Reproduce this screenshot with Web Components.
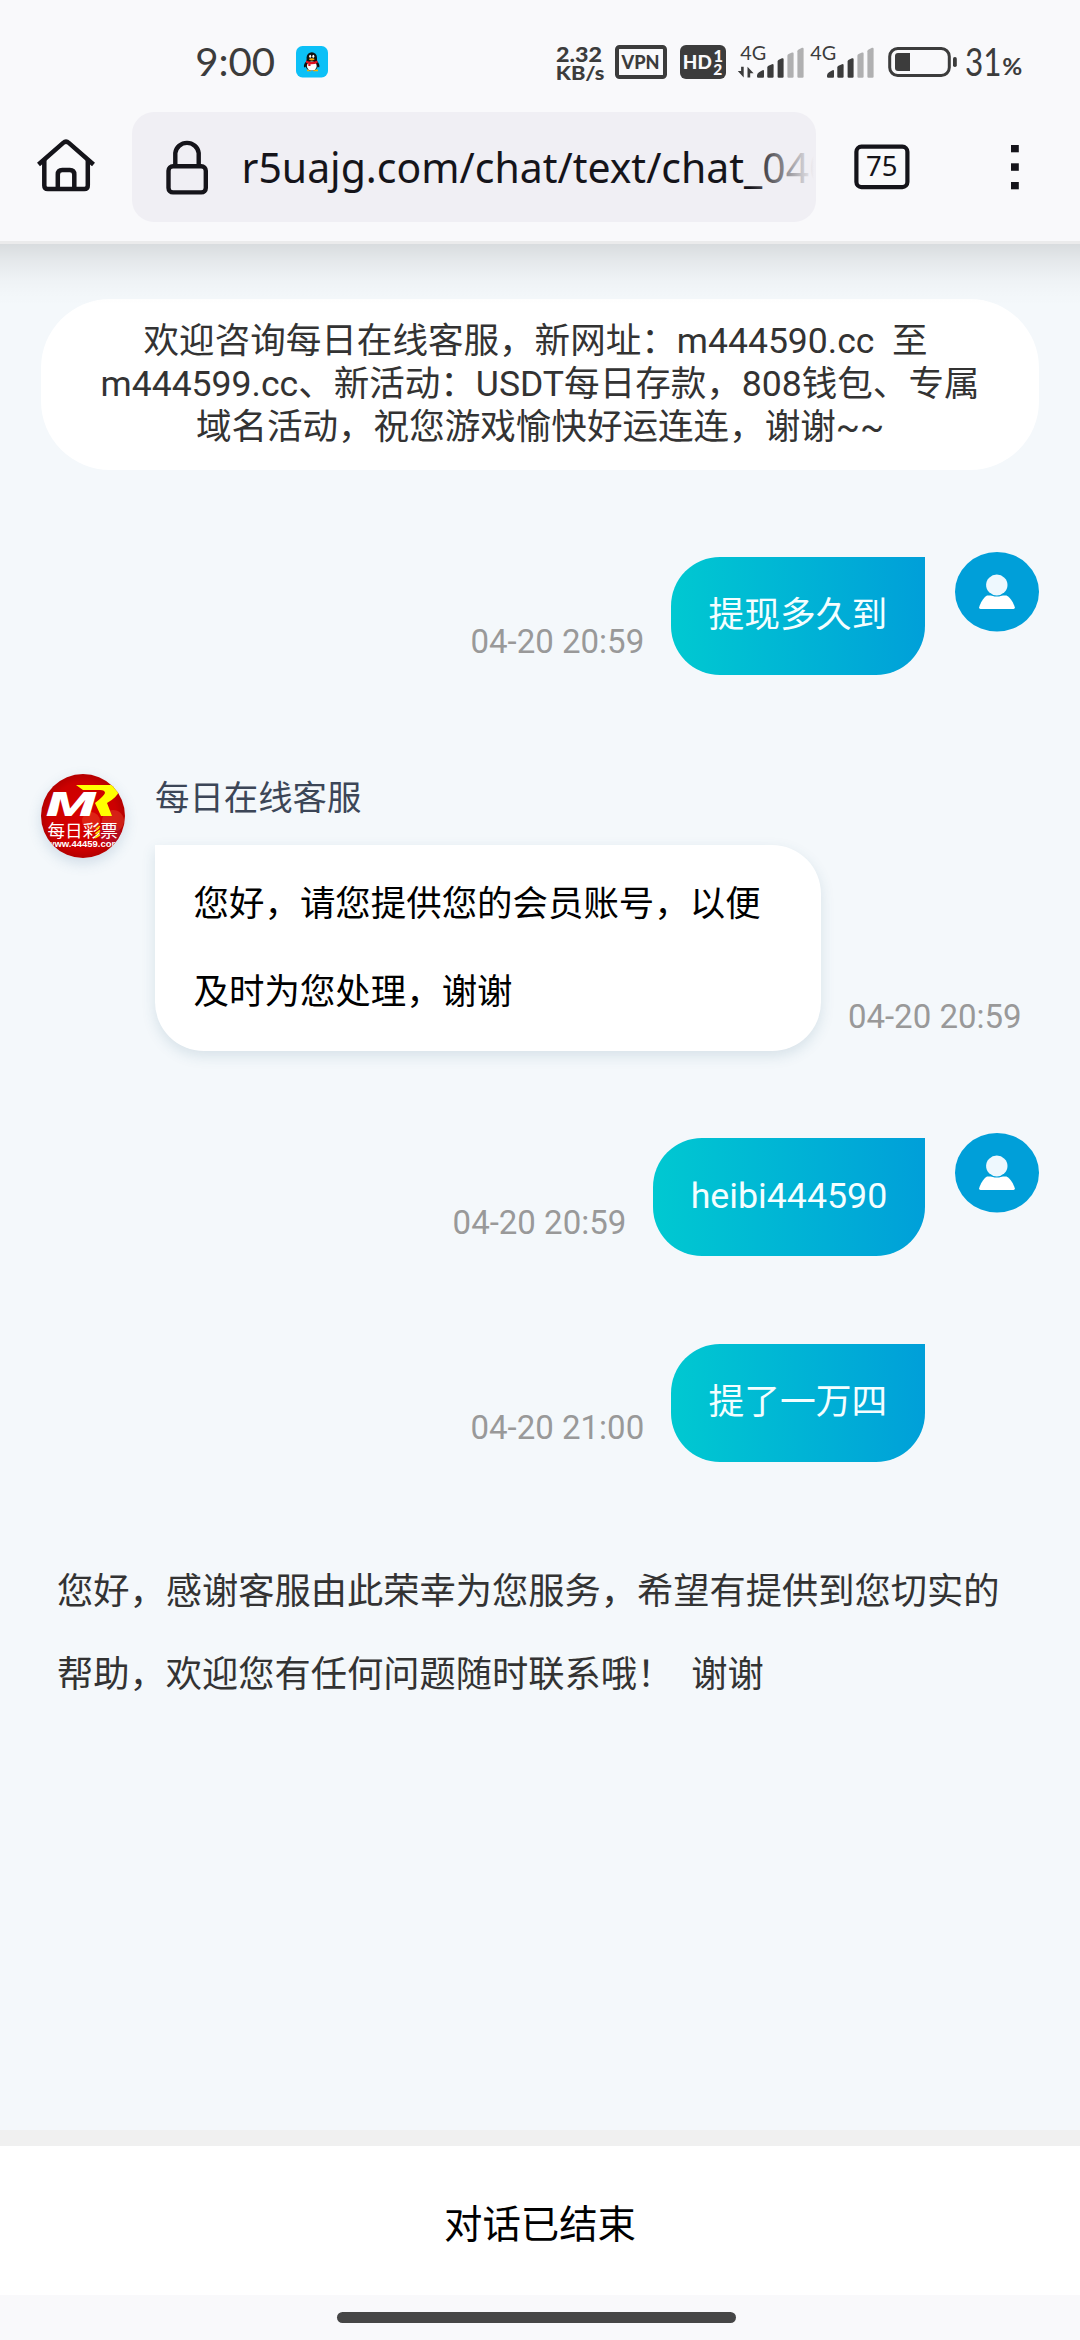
<!DOCTYPE html>
<html lang="zh-CN">
<head>
<meta charset="utf-8">
<title>在线客服</title>
<style>
html,body{margin:0;padding:0}
body{width:1080px;height:2340px;overflow:hidden;background:#f4f8fb;font-family:Roboto,"Noto Sans CJK SC",sans-serif}
</style>
</head>
<body>
<chat-app></chat-app>
<script>
const define = (name, html) => customElements.define(name, class extends HTMLElement {
  constructor(){
    super();
    const t = document.createElement('template');
    t.innerHTML = html.trim();
    this.attachShadow({mode:'open'}).append(t.content.cloneNode(true));
  }
});

/* Signal strength: shared bars, optional data arrows */
customElements.define('signal-meter', class extends HTMLElement {
  constructor(){
    super();
    const arrows = this.hasAttribute('data')
      ? '<path d="M6.7 66.3V77L.8 70.6H4.1V66.3ZM10.5 77V66.3L16.6 72.8H13.2V77Z" transform="translate(0 .4)"/>' : '';
    this.attachShadow({mode:'open'}).innerHTML = `
<style>:host{display:block;height:40px}svg{display:block;overflow:visible}</style>
<svg width="70" height="40" viewBox="0 42 70 40" fill="#3c3c3c">
  <text x="3.2" y="60" font-family="Lato" font-size="20" textLength="26" lengthAdjust="spacingAndGlyphs">4G</text>
  ${arrows}
  <path d="M20 75.5Q20 73.5 22 72.3L25 70.4Q27 69.4 27 71V76.5Q27 77.7 26 77.7H21.2Q20 77.7 20 76.5Z"/>
  <path d="M30.3 67.5Q30.3 66.3 31.5 65.7L35 64.2Q36.6 63.8 36.6 65.2V76.5Q36.6 77.7 35.5 77.7H31.5Q30.3 77.7 30.3 76.5Z"/>
  <path d="M40.6 61.5Q40.6 60.3 41.8 59.7L45 58.3Q46.6 57.9 46.6 59.3V76.5Q46.6 77.7 45.5 77.7H41.8Q40.6 77.7 40.6 76.5Z"/>
  <g fill="#b0b0b1"><path d="M50.4 55.8Q50.4 54.6 51.6 54L55 52.6Q56.6 52.2 56.6 53.6V76.5Q56.6 77.7 55.5 77.7H51.6Q50.4 77.7 50.4 76.5Z"/>
  <path d="M60.4 51.2Q60.4 50 61.6 49.4L65 47.8Q66.6 47.4 66.6 48.8V76.5Q66.6 77.7 65.5 77.7H61.6Q60.4 77.7 60.4 76.5Z"/></g>
</svg>`;
  }
});

define('status-bar', `
<style>
:host{display:flex;align-items:center;height:100px;padding-top:23px;padding-left:190px;box-sizing:border-box;background:#f9f9fb}
svg{display:block;flex:none;overflow:visible}
.qq{margin-left:16px}.speed{margin-left:219px}
</style>
<svg width="90" height="40" viewBox="190 42 90 40" fill="#3c3c3c"><text x="195.2" y="76.3" font-family="Lato" font-size="39" textLength="80" lengthAdjust="spacingAndGlyphs">9:00</text></svg>
<svg class="qq" width="32" height="40" viewBox="296 42 32 40">
  <rect x="296" y="46" width="32" height="31.5" rx="6.5" fill="#0cc0f7"/>
  <path d="M307 70.3h4M313 70.3h5" stroke="#f5b400" stroke-width="1.8"/>
  <path d="M305.6 62C303.8 64 303.6 67 304.4 67.5L306.5 66M317.8 62C319.6 64 319.8 67 319 67.5L317 66" fill="#111"/>
  <ellipse cx="311.7" cy="64.5" rx="6.5" ry="6.2" fill="#111"/>
  <ellipse cx="311.8" cy="66" rx="4.9" ry="4.6" fill="#fff"/>
  <path d="M306.6 61V57.5a5.2 5.2 0 0 1 10.4 0V61Z" fill="#111"/>
  <ellipse cx="310.2" cy="56.3" rx="1" ry="1.5" fill="#fff"/><ellipse cx="313.3" cy="56.3" rx="1" ry="1.5" fill="#fff"/>
  <ellipse cx="311.8" cy="59.3" rx="2.8" ry="1.1" fill="#fa0"/>
  <path d="M306 60.6Q311.8 63.2 317.5 60.6V63Q314 64.6 310.5 64.3V66H308.3V63.6L306 62.8Z" fill="#e01020"/>
</svg>
<svg class="speed" width="60" height="44" viewBox="547 40 60 44" fill="#3c3c3c" font-family="Lato" font-weight="900">
  <text x="556" y="62.2" font-size="21.5" textLength="46" lengthAdjust="spacingAndGlyphs">2.32</text>
  <text x="555.8" y="80" font-size="19.8" textLength="48.6" lengthAdjust="spacingAndGlyphs">KB/s</text>
</svg>
<svg width="66" height="40" viewBox="607 42 66 40"><rect x="617" y="47" width="48" height="30" rx="2.5" fill="none" stroke="#3c3c3c" stroke-width="4"/>
  <text x="621.6" y="69" font-family="Lato" font-weight="900" font-size="18.4" textLength="38" lengthAdjust="spacingAndGlyphs" fill="#3c3c3c">VPN</text></svg>
<svg width="64" height="40" viewBox="673 42 64 40" font-family="Lato" font-weight="900" fill="#f9f9fb"><rect x="680" y="45" width="46" height="34" rx="6" fill="#3c3c3c"/>
  <text x="682.8" y="69" font-size="18.6" textLength="29" lengthAdjust="spacingAndGlyphs">HD</text>
  <text x="713.4" y="61.5" font-size="16.5">1</text><text x="713.3" y="75" font-size="15.5">2</text></svg>
<signal-meter data></signal-meter><signal-meter></signal-meter>
<svg width="150" height="40" viewBox="877 42 150 40" fill="#3c3c3c">
  <rect x="889.7" y="48.5" width="59.6" height="27" rx="8" fill="none" stroke="#3c3c3c" stroke-width="3"/>
  <path d="M898 53H910V71H898Q895 71 895 68V56Q895 53 898 53Z"/><rect x="953" y="57" width="3.8" height="10" rx="1.8"/>
  <text x="965" y="76" font-family="Lato" font-size="38.5" textLength="36.5" lengthAdjust="spacingAndGlyphs">31</text>
  <text x="1002.2" y="75.3" font-family="Lato" font-weight="bold" font-size="23.5" textLength="20" lengthAdjust="spacingAndGlyphs">%</text>
</svg>`);

define('browser-bar', `
<style>
:host{display:flex;align-items:flex-start;height:144px;padding:12px 0 0 32px;box-sizing:border-box;background:#f9f9fb;border-bottom:3.4px solid #ebebec;position:relative}
:host::after{content:"";position:absolute;left:0;right:0;top:144px;height:62px;background:linear-gradient(rgba(0,0,0,.115),rgba(0,0,0,.065) 25%,rgba(0,0,0,.025) 58%,rgba(0,0,0,.008) 80%,transparent)}
svg{display:block;flex:none;overflow:visible}
.url{display:flex;width:684px;height:110px;border-radius:22px;background:#f0eff4;margin-left:32px;overflow:hidden}
.tabs{margin-left:34px}.menu{margin-left:90px}
</style>
<svg width="68" height="110" viewBox="32 112 68 110" fill="none" stroke="#15141a" stroke-width="4.5" stroke-linejoin="round">
  <path d="M38.5 164.5L63.2 142.9Q66 140.5 68.8 142.9L93.5 164.5"/><path d="M44.3 160V185.5Q44.3 189 47.8 189H84.3Q87.8 189 87.8 185.5V160"/>
  <path d="M57.8 189V174.5Q57.8 170 62.3 170H69.8Q74.3 170 74.3 174.5V189"/>
</svg>
<div class="url">
<svg width="684" height="110" viewBox="132 112 684 110">
  <defs><linearGradient id="fade" gradientUnits="userSpaceOnUse" x1="750" x2="814" y1="0" y2="0"><stop stop-color="#15141a"/><stop offset="1" stop-color="#15141a" stop-opacity="0"/></linearGradient></defs>
  <g fill="none" stroke="#15141a" stroke-width="4.4"><rect x="168.5" y="166.2" width="37.3" height="26.2" rx="4.5"/><path d="M175.3 166V153A11.8 11.6 0 0 1 198.7 153V166"/></g>
  <text x="241.5" y="182.6" font-family="Noto Sans" font-size="41" textLength="591" lengthAdjust="spacingAndGlyphs" fill="url(#fade)">r5uajg.com/chat/text/chat_040</text>
</svg></div>
<svg class="tabs" width="64" height="110" viewBox="850 112 64 110"><rect x="856.4" y="146.7" width="51" height="40.4" rx="5" fill="none" stroke="#15141a" stroke-width="4.2"/>
  <text x="866" y="176.2" font-family="Noto Sans" font-size="27" textLength="31.5" lengthAdjust="spacingAndGlyphs" fill="#15141a">75</text></svg>
<svg class="menu" width="22" height="110" viewBox="1004 112 22 110" fill="#15141a"><rect x="1011" y="145" width="7.8" height="7.3"/><rect x="1011" y="163.3" width="7.8" height="7.5"/><rect x="1011" y="182" width="7.8" height="7.3"/></svg>`);

define('chat-notice', `
<style>:host{display:block;margin:55px 41.3px 0;height:170.7px;box-sizing:border-box;padding-top:21.4px;border-radius:69px;background:#fff;color:#333;font-size:35.55px;line-height:42.6px;text-align:center;white-space:nowrap}</style><slot></slot>`);

define('user-avatar', `
<style>:host{display:block;width:84px;height:80px}svg{display:block}</style>
<svg width="84" height="80" viewBox="0 0 84 80"><ellipse cx="42" cy="39.8" rx="42" ry="39.8" fill="#009fd9"/>
<path d="M32 43.5H51.5C56 46 58.3 51 59.8 55.2Q60 57 58.5 57H25.5Q23.8 57 24.2 55.2C25.5 51 28 46 32 43.5Z" fill="#fff"/>
<ellipse cx="41.8" cy="33" rx="11.8" ry="11.6" fill="#009fd9"/><ellipse cx="41.8" cy="33" rx="10.7" ry="10.4" fill="#eef8fe"/></svg>`);

define('agent-avatar', `
<style>:host{display:block;width:84px;height:84px;border-radius:50%;box-shadow:0 5px 14px rgba(60,110,150,.2)}svg{display:block}</style>
<svg width="84" height="84" viewBox="41 774 84 84">
<defs><clipPath id="c"><circle cx="83" cy="816" r="42"/></clipPath><radialGradient id="g"><stop stop-color="#d80000"/><stop offset=".8" stop-color="#cc0000"/><stop offset="1" stop-color="#b40000"/></radialGradient></defs>
<g clip-path="url(#c)"><rect x="41" y="774" width="84" height="84" fill="url(#g)"/>
<circle cx="91" cy="821" r="9" fill="#e43b22" opacity=".6"/><circle cx="113" cy="821" r="11" fill="#e0402b" opacity=".5"/><circle cx="110" cy="834" r="11" fill="#a51a4c" opacity=".4"/>
<text x="46.5" y="816.2" font-family="Roboto" font-weight="900" font-style="italic" font-size="33" textLength="49" lengthAdjust="spacingAndGlyphs" fill="#fff">M</text>
<path d="M76 785H112Q120 785.5 119 791Q117.5 797 107 803L112 816H101L95 803Q104 796 105 793Q105 790 100 790H83Z" fill="#ff0"/>
<text x="47.5" y="837" font-family="Noto Sans CJK SC" font-size="17.6" fill="#fff">每日彩票</text>
<path d="M96 829.5L100 826M95.5 834L100 830.5M95 837.7L100 834.7" stroke="#fd0" stroke-width="1.6"/>
<text x="47" y="847" font-family="Liberation Sans" font-weight="bold" font-size="9.3" textLength="73" lengthAdjust="spacingAndGlyphs" fill="#fff">www.44459.com</text></g></svg>`);

define('user-message', `
<style>
:host{display:flex;justify-content:flex-end;align-items:flex-end;margin-right:41px;height:122.7px;font-size:35.75px}
.time{font-size:33px;line-height:39px;color:#999;margin:0 26.7px var(--time-drop,13.2px) 0}
.bubble{box-sizing:border-box;height:117.7px;line-height:117.7px;padding:0 37.7px;border-radius:49px 0 49px 49px;color:#f4feff;background:linear-gradient(87deg,#00c9d1,#009fd9);white-space:nowrap}
.side{width:84px;margin-left:30px;align-self:flex-start}
</style>
<div class="time"><slot name="time"></slot></div><div class="bubble"><slot></slot></div><div class="side"><slot name="avatar"></slot></div>`);

define('agent-message', `
<style>
:host{display:flex;margin:99px 0 0 41px;height:277.3px}
.body{margin-left:30px;padding-top:5px;width:665.6px}
.name{font-size:34.4px;line-height:39px;color:#3c4657}
.bubble{margin-top:27.3px;box-sizing:border-box;height:206px;padding:15px 38.6px;line-height:88px;font-size:35.45px;color:#000;background:#fff;border-radius:0 49px 49px 49px;box-shadow:0 5px 14px rgba(50,100,130,.15);white-space:nowrap}
.time{align-self:flex-end;font-size:33px;line-height:39px;color:#999;margin:0 0 15px 27.3px}
</style>
<slot name="avatar"></slot>
<div class="body"><div class="name"><slot name="name"></slot></div><div class="bubble"><slot></slot></div></div>
<div class="time"><slot name="time"></slot></div>`);

define('closing-note', `
<style>:host{display:block;margin:89.7px 0 0 57px;font-size:36.25px;line-height:82.4px;color:#333;white-space:nowrap}</style><slot></slot>`);

define('chat-footer', `
<style>
:host{display:flex;flex-direction:column;height:210px;background:#f9f9fb}
.ended{border-top:16.7px solid #f0f0f0;height:149.3px;display:flex;align-items:center;justify-content:center;background:#fff;color:#000;font-size:38.4px;line-height:46px}
.ended span{padding-top:9px}
.pill{width:399px;height:10.6px;border-radius:6px;background:#464646;margin:17px 0 0 337px}
</style>
<div class="ended"><span><slot></slot></span></div><div class="pill"></div>`);

define('chat-app', `
<style>
:host{display:flex;flex-direction:column;height:2340px;background:#f4f8fb}
main{flex:1;min-height:0;display:flex;flex-direction:column}
</style>
<status-bar></status-bar>
<browser-bar></browser-bar>
<main>
<chat-notice>欢迎咨询每日在线客服，新网址：m444590.cc&nbsp; 至&nbsp;<br>m444599.cc、新活动：USDT每日存款，808钱包、专属<br>域名活动，祝您游戏愉快好运连连，谢谢~~</chat-notice>
<user-message style="margin-top:82.3px"><span slot="time">04-20 20:59</span>提现多久到<user-avatar slot="avatar"></user-avatar></user-message>
<agent-message><agent-avatar slot="avatar"></agent-avatar><span slot="name">每日在线客服</span>您好，请您提供您的会员账号，以便<br>及时为您处理，谢谢<span slot="time">04-20 20:59</span></agent-message>
<user-message style="margin-top:82px"><span slot="time">04-20 20:59</span>heibi444590<user-avatar slot="avatar"></user-avatar></user-message>
<user-message style="margin-top:83.3px;--time-drop:15px"><span slot="time">04-20 21:00</span>提了一万四</user-message>
<closing-note>您好，感谢客服由此荣幸为您服务，希望有提供到您切实的<br>帮助，欢迎您有任何问题随时联系哦！&nbsp;&nbsp;谢谢</closing-note>
</main>
<chat-footer>对话已结束</chat-footer>`);
</script>
</body>
</html>
